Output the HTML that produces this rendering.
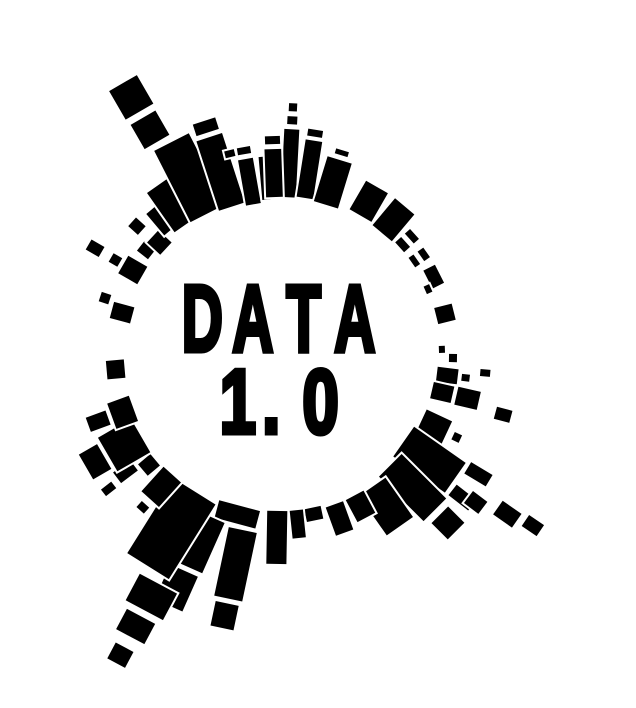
<!DOCTYPE html>
<html><head><meta charset="utf-8"><style>
html,body{margin:0;padding:0;background:#fff;width:636px;height:708px;overflow:hidden}
</style></head><body>
<svg width="636" height="708" viewBox="0 0 636 708" xmlns="http://www.w3.org/2000/svg">
<g fill="#000" stroke="#fff" stroke-width="2" id="bars">
</g>
<g font-family="'Liberation Sans',sans-serif" font-weight="bold" fill="#000" stroke="#000" stroke-width="5" stroke-linejoin="miter">
<g transform="translate(0,351) scale(0.6,1)">
<text x="303" y="0" font-size="95">D</text>
<text x="387" y="0" font-size="95">A</text>
<text x="477" y="0" font-size="95">T</text>
<text x="557" y="0" font-size="95">A</text>
</g>
<g transform="translate(0,433) scale(0.72,1)">
<text x="305" y="0" font-size="91">1</text>
<text x="364" y="0" font-size="91">.</text>
<text x="420" y="0" font-size="91">0</text>
</g>
</g>
</svg>
<script>
var d=[[3,157,227,20],[3,230,240,14],[3,243,253,12],[9,158,218,22],[9,220,229,20],[17,156,205,32],[17,208,215,18],[30,160,195,32],[40,158,195,32],[48,160,170,18],[48,173,182,18],[55,160,168,16],[55,171,180,16],[63,165,180,26],[66,158,166,12],[76,160,180,22],[88,158,166,10],[91,168,178,12],[97,157,180,20],[97,182,192,10],[95,200,212,10],[103,155,178,22],[103,180,205,24],[105,222,240,17],[115,155,185,32],[115,190,200,12],[125,150,215,45],[121,218,245,18],[128,218,245,18],[135,155,220,40],[135,225,250,30],[127,235,255,20],[125,265,290,22],[124,295,315,18],[145,160,210,40],[152,158,185,26],[160,158,190,24],[168,155,170,22],[174,155,185,18],[181,155,210,26],[195,155,175,52],[192,178,250,36],[192,253,280,30],[204,175,232,44],[204,235,275,38],[212,160,250,60],[208,258,290,52],[208,295,320,40],[208,330,350,26],[222,160,195,30],[222,200,210,14],[230,162,180,20],[233,182,205,18],[232,210,225,12],[240,160,200,48],[240,202,225,36],[250,155,180,34],[250,182,205,20],[265,155,175,24],[285,152,175,22],[288,178,190,14],[300,158,182,26],[300,184,196,14],[300,205,222,16],[308,162,178,16],[312,185,200,16],[313,155,175,22],[320,165,195,30],[325,160,210,40],[333,158,240,48],[330,245,275,36],[330,280,315,40],[342,155,230,34],[342,233,247,30],[350,152,200,20],[350,203,212,18],[346,203,212,14],[355,155,200,12],[358,157,207,22],[358,210,220,20]];
var g=document.getElementById('bars'),s='';
d.forEach(function(b){var w=Math.max(9,b[3]*0.85);s+='<rect x="'+(280-w/2)+'" y="'+(355-b[2])+'" width="'+w+'" height="'+(b[2]-b[1])+'" transform="rotate('+b[0]+' 280 355)"/>';});
g.innerHTML=s;
</script>
</body></html>
